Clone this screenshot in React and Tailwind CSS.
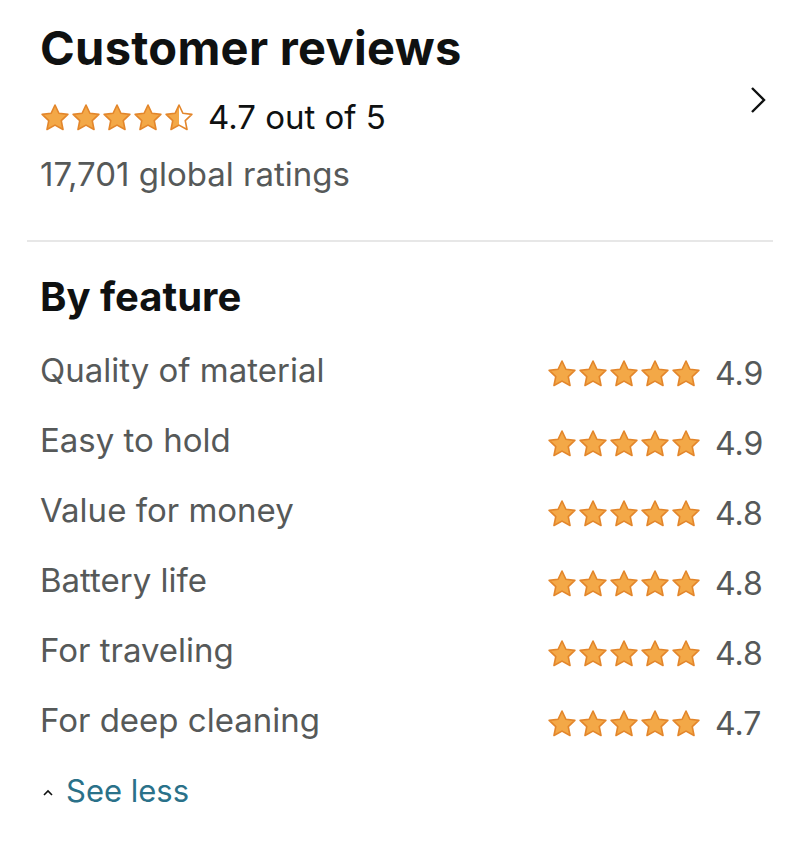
import React from "react";

const features = [
  { name: "Quality of material", score: "4.9" },
  { name: "Easy to hold", score: "4.9" },
  { name: "Value for money", score: "4.8" },
  { name: "Battery life", score: "4.8" },
  { name: "For traveling", score: "4.8" },
  { name: "For deep cleaning", score: "4.7" },
];

const STAR =
  "M12 1.6l3.1 6.6 7.2.9-5.3 5 1.4 7.1L12 17.7l-6.4 3.5L7 14.1l-5.3-5 7.2-.9z";

function Star({ half = false }) {
  return (
    <svg viewBox="0 0 24 24" className="w-[30px] h-[30px]">
      <defs>
        <clipPath id="half-left">
          <rect x="0" y="0" width="12" height="24" />
        </clipPath>
      </defs>
      {half ? (
        <>
          <path d={STAR} fill="#fff" />
          <path d={STAR} fill="#f3a847" clipPath="url(#half-left)" />
          <path d={STAR} fill="none" stroke="#e3862b" strokeWidth="1.3" strokeLinejoin="round" />
        </>
      ) : (
        <path d={STAR} fill="#f3a847" stroke="#e3862b" strokeWidth="1.3" strokeLinejoin="round" />
      )}
    </svg>
  );
}

function Stars({ halfLast = false }) {
  return (
    <div className="flex gap-px">
      {[0, 1, 2, 3, 4].map((i) => (
        <Star key={i} half={halfLast && i === 4} />
      ))}
    </div>
  );
}

export default function App() {
  return (
    <div className="w-[800px] h-[854px] bg-white px-[27px] font-['Inter',sans-serif]">
      {/* Header */}
      <div className="flex items-center justify-between pl-[13px] pr-[6px] pt-[20px] pb-[44px]">
        <div>
          <h2 className="text-[47px] leading-[56px] font-bold tracking-[0.3px] text-[#0f1111]">
            Customer reviews
          </h2>
          <div className="flex items-center gap-[14px] h-[40px] mt-[22px]">
            <Stars halfLast />
            <span className="text-[33px] text-[#0f1111]">4.7 out of 5</span>
          </div>
          <div className="text-[33px] leading-[44px] text-[#565959] mt-[14px]">
            17,701 global ratings
          </div>
        </div>
        <svg viewBox="0 0 18 30" className="w-[18px] h-[30px] -mt-[16px]">
          <path d="M3 3l12 12L3 27" fill="none" stroke="#0f1111" strokeWidth="2.4" />
        </svg>
      </div>

      <div className="border-t-2 border-[#e7e7e7]" />

      {/* By feature */}
      <div className="pl-[13px] pr-[11px] pt-[31px]">
        <h3 className="text-[40px] leading-[48px] font-bold text-[#0f1111]">By feature</h3>
        <div className="mt-[15px]">
          {features.map((f) => (
            <div key={f.name} className="flex items-center justify-between h-[70px]">
              <span className="text-[33px] text-[#565959]">{f.name}</span>
              <div className="flex items-center gap-[14px] mt-[6px]">
                <Stars />
                <span className="w-[47px] text-[32px] text-[#565959]">{f.score}</span>
              </div>
            </div>
          ))}
        </div>
        <div className="flex items-center gap-[12px] mt-[15px] pl-[2px] h-[40px]">
          <svg viewBox="0 0 12 12" className="w-[12px] h-[12px] mt-[4px]">
            <path d="M2 8l4-4 4 4" fill="none" stroke="#0f1111" strokeWidth="1.6" />
          </svg>
          <span className="text-[31px] text-[#2a7189]">See less</span>
        </div>
      </div>
    </div>
  );
}
